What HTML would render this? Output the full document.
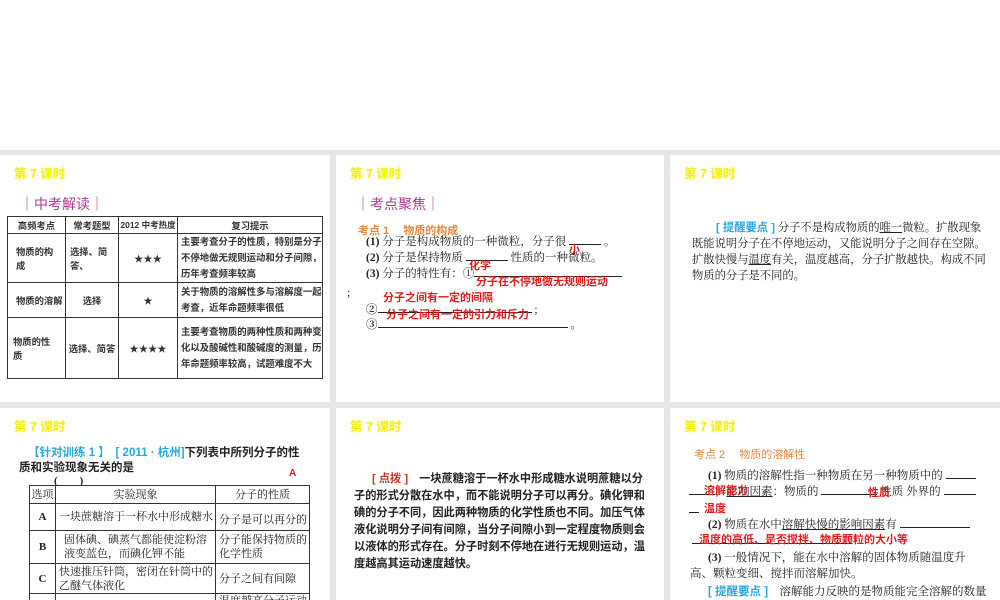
<!DOCTYPE html>
<html><head><meta charset="utf-8">
<style>
*{margin:0;padding:0;box-sizing:border-box}
body{width:1000px;height:600px;background:#fff;position:relative;overflow:hidden;font-family:"Liberation Serif","Noto Serif CJK SC","Noto Sans CJK SC",serif;color:#222}
.gap{position:absolute;background:#e6e6e6}
.p{position:absolute;background:#fff;overflow:hidden}
.a{position:absolute;white-space:nowrap}
.h{font-family:"Liberation Sans","Noto Sans CJK SC",sans-serif;color:#f2ee20;font-weight:bold;font-size:12.5px;left:14px;top:8px;text-shadow:0 0 2px #ff8}
.sec{font-family:"Liberation Sans","Noto Sans CJK SC",sans-serif;color:#b2368f;font-size:14px}
.or{font-family:"Liberation Sans","Noto Sans CJK SC",sans-serif;color:#e5873e;font-size:11px;font-weight:bold}
.red{font-family:"Liberation Sans","Noto Sans CJK SC",sans-serif;color:#e31b1b;font-weight:bold;font-size:11px}
.blue{font-family:"Liberation Sans","Noto Sans CJK SC",sans-serif;color:#2aa7dc;font-weight:bold}
.t{font-size:11.5px;line-height:16px}
.ul{display:inline-block;border-bottom:1px solid #222;height:12px;vertical-align:baseline}
table{border-collapse:collapse;position:absolute}
td{border:1px solid #333}
</style></head><body>
<div class="gap" style="left:0;top:150px;width:1000px;height:450px"></div>

<!-- Panel 1 -->
<div class="p" style="left:0;top:155px;width:330px;height:247px">
<div class="a h">第 7 课时</div>
<div class="a sec" style="left:20px;top:39px">｜中考解读｜</div>
<table style="left:7px;top:61px;width:316px;height:163px;font-family:'Liberation Sans','Noto Sans CJK SC',sans-serif;font-size:9.3px;font-weight:bold;color:#333">
<tr style="height:17px"><td style="width:58px;text-align:center">高频考点</td><td style="width:53px;text-align:center">常考题型</td><td style="width:59px;text-align:center;font-size:8.5px">2012 中考热度</td><td style="text-align:center">复习提示</td></tr>
<tr style="height:49px"><td style="padding-left:8px">物质的构<br>成</td><td style="padding-left:4px">选择、简<br>答、</td><td style="text-align:center">★★★</td><td style="padding-left:3px;line-height:16px;font-size:9.4px">主要考查分子的性质，特别是分子不停地做无规则运动和分子间隙，历年考查频率较高</td></tr>
<tr style="height:35px"><td style="padding-left:8px">物质的溶解</td><td style="text-align:center">选择</td><td style="text-align:center">★</td><td style="padding-left:3px;line-height:16px;font-size:9.4px">关于物质的溶解性多与溶解度一起考查，近年命题频率很低</td></tr>
<tr style="height:61px"><td style="padding-left:5px">物质的性<br>质</td><td style="text-align:center">选择、简答</td><td style="text-align:center">★★★★</td><td style="padding-left:3px;line-height:16px;font-size:9.4px">主要考查物质的两种性质和两种变化以及酸碱性和酸碱度的测量，历年命题频率较高，试题难度不大</td></tr>
</table>
</div>

<!-- Panel 2 -->
<div class="p" style="left:336px;top:155px;width:328px;height:247px">
<div class="a h">第 7 课时</div>
<div class="a sec" style="left:20px;top:39px">｜考点聚焦｜</div>
<div class="a or" style="left:22px;top:67px">考点 1　 物质的构成</div>
<div class="a t" style="left:30px;top:78px"><b>(1)</b> 分子是构成物质的一种微粒，分子很 <span class="ul" style="width:32px"></span> 。</div>
<div class="a red" style="left:233px;top:86px">小</div>
<div class="a t" style="left:30px;top:94px"><b>(2)</b> 分子是保持物质 <span class="ul" style="width:42px"></span> 性质的一种微粒。</div>
<div class="a red" style="left:133px;top:102px">化学</div>
<div class="a t" style="left:30px;top:110px"><b>(3)</b> 分子的特性有：①<span class="ul" style="width:148px"></span></div>
<div class="a red" style="left:140px;top:118px">分子在不停地做无规则运动</div>
<div class="a t" style="left:11px;top:130px">;</div>
<div class="a red" style="left:47px;top:134px">分子之间有一定的间隔</div>
<div class="a t" style="left:30px;top:146px"><b>②</b><span class="ul" style="width:154px"></span> ;</div>
<div class="a red" style="left:50px;top:151px">分子之间有一定的引力和斥力</div>
<div class="a t" style="left:30px;top:161px"><b>③</b><span class="ul" style="width:190px"></span> 。</div>
</div>

<!-- Panel 3 -->
<div class="p" style="left:670px;top:155px;width:330px;height:247px">
<div class="a h">第 7 课时</div>
<div class="a" style="left:22px;top:65px;width:296px;white-space:normal;text-indent:24px;font-size:11.3px;line-height:16px">
<span class="blue">[ 提醒要点 ]</span> 分子不是构成物质的<u>唯一</u>微粒。扩散现象既能说明分子在不停地运动，又能说明分子之间存在空隙。扩散快慢与<u>温度</u>有关，温度越高，分子扩散越快。构成不同物质的分子是不同的。</div>
</div>

<!-- Panel 4 -->
<div class="p" style="left:0;top:408px;width:330px;height:192px">
<div class="a h">第 7 课时</div>
<div class="a" style="left:28px;top:36px;font-family:'Liberation Sans','Noto Sans CJK SC',sans-serif;font-size:11.5px;font-weight:bold"><span class="blue">【针对训练 1 】　[ 2011 · 杭州]</span>下列表中所列分子的性</div>
<div class="a" style="left:19px;top:51px;font-family:'Liberation Sans','Noto Sans CJK SC',sans-serif;font-size:11.5px;font-weight:bold">质和实验现象无关的是</div>
<div class="a" style="left:54px;top:64px;font-size:11px;font-weight:bold">(　　)</div>
<div class="a red" style="left:289px;top:60px;font-size:10px">A</div>
<table style="left:29px;top:77px;width:281px;font-size:11px;line-height:14px">
<tr style="height:18px"><td style="width:26px;text-align:center">选项</td><td style="width:160px;text-align:center">实验现象</td><td style="text-align:center">分子的性质</td></tr>
<tr style="height:27px"><td style="text-align:center;font-weight:bold">A</td><td style="padding-left:3px">一块蔗糖溶于一杯水中形成糖水</td><td style="padding-left:3px;padding-top:6px">分子是可以再分的</td></tr>
<tr style="height:33px"><td style="text-align:center;font-weight:bold">B</td><td style="padding-left:8px">固体碘、碘蒸气都能使淀粉溶<br>液变蓝色，而碘化钾不能</td><td style="padding-left:3px">分子能保持物质的<br>化学性质</td></tr>
<tr style="height:30px"><td style="text-align:center;font-weight:bold">C</td><td style="padding-left:3px">快速推压针筒，密闭在针筒中的<br>乙醚气体液化</td><td style="padding-left:3px">分子之间有间隙</td></tr>
<tr style="height:30px"><td></td><td></td><td style="padding-left:3px;vertical-align:top">温度越高分子运动</td></tr>
</table>
</div>

<!-- Panel 5 -->
<div class="p" style="left:336px;top:408px;width:328px;height:192px">
<div class="a h">第 7 课时</div>
<div class="a" style="left:18px;top:63px;width:298px;white-space:normal;text-indent:18px;font-family:'Liberation Sans','Noto Sans CJK SC',sans-serif;font-size:11.2px;font-weight:bold;line-height:17px;color:#222">
<span style="color:#c0392b">[ 点拨 ]</span>　一块蔗糖溶于一杯水中形成糖水说明蔗糖以分子的形式分散在水中，而不能说明分子可以再分。碘化钾和碘的分子不同，因此两种物质的化学性质也不同。加压气体液化说明分子间有间隙，当分子间隙小到一定程度物质则会以液体的形式存在。分子时刻不停地在进行无规则运动，温度越高其运动速度越快。</div>
</div>

<!-- Panel 6 -->
<div class="p" style="left:670px;top:408px;width:330px;height:192px">
<div class="a h">第 7 课时</div>
<div class="a or" style="left:24px;top:38px;font-weight:normal">考点 2　 物质的溶解性</div>
<div class="a t" style="left:38px;top:59px"><b>(1)</b> 物质的溶解性指一种物质在另一种物质中的 <span class="ul" style="width:30px"></span></div>
<div class="a t" style="left:19px;top:75px"><span class="ul" style="width:26px"></span>，<u>影响因素</u>：物质的 <span class="ul" style="width:56px"></span> 性质 外界的 <span class="ul" style="width:32px"></span></div>
<div class="a red" style="left:34px;top:74px">溶解能力</div>
<div class="a red" style="left:198px;top:76px">性质</div>
<div class="a t" style="left:19px;top:93px"><span class="ul" style="width:10px"></span></div>
<div class="a red" style="left:34px;top:92px">温度</div>
<div class="a t" style="left:38px;top:108px"><b>(2)</b> 物质在水中<u>溶解快慢的影响因素</u>有 <span class="ul" style="width:70px"></span></div>
<div class="a t" style="left:22px;top:124px"><span class="ul" style="width:160px"></span></div>
<div class="a red" style="left:29px;top:123px">温度的高低、是否搅拌、物质颗粒的大小等</div>
<div class="a t" style="left:38px;top:142px"><b>(3)</b> 一般情况下，能在水中溶解的固体物质随温度升</div>
<div class="a t" style="left:20px;top:158px">高、颗粒变细、搅拌而溶解加快。</div>
<div class="a t" style="left:38px;top:176px"><span class="blue">[ 提醒要点 ]</span>　溶解能力反映的是物质能完全溶解的数量</div>
</div>
</body></html>
